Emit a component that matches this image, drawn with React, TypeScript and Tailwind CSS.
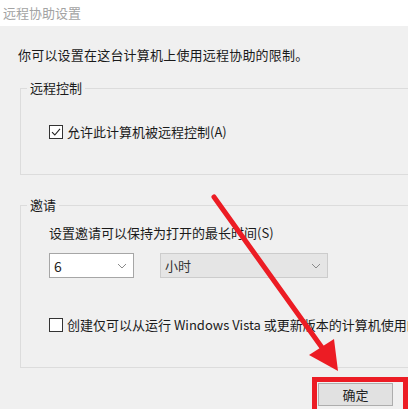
import React from "react";

const FONT = {
  fontFamily: '"Microsoft YaHei", "Noto Sans CJK SC", "Noto Sans", sans-serif',
};

function Checkbox({ checked }: { checked?: boolean }) {
  return (
    <span className="flex h-[14px] w-[14px] shrink-0 items-center justify-center border border-[#333333] bg-white">
      {checked && (
        <svg width="10" height="10" viewBox="0 0 10 10">
          <path d="M1 5.2 L3.8 8 L9 1.8" fill="none" stroke="#222" strokeWidth="1.1" />
        </svg>
      )}
    </span>
  );
}

function Chevron() {
  return (
    <svg width="10" height="6" viewBox="0 0 10 6">
      <path d="M1 1 L5 5 L9 1" fill="none" stroke="#8a8a8a" strokeWidth="1" />
    </svg>
  );
}

export default function App() {
  return (
    <div
      className="relative h-[409px] w-[408px] overflow-hidden bg-[#f0f0f0] text-[13px] leading-[18px] text-[#1a1a1a]"
      style={FONT}
    >
      {/* title bar */}
      <div className="flex h-[26px] items-center bg-white pl-[3px] text-[#a3a3a3]">
        远程协助设置
      </div>

      <p className="ml-[18px] mt-[20px] whitespace-nowrap tracking-[0.2px]">
        你可以设置在这台计算机上使用远程协助的限制。
      </p>

      {/* 远程控制 */}
      <fieldset className="ml-[20px] mt-[15px] w-[400px] border border-[#dcdcdc] pb-[33px] pl-[28px] pt-[26px]">
        <legend className="-ml-[22px] px-[3px]">远程控制</legend>
        <label className="flex items-center gap-[4px] whitespace-nowrap">
          <Checkbox checked />
          允许此计算机被远程控制(A)
        </label>
      </fieldset>

      {/* 邀请 */}
      <fieldset className="ml-[20px] mt-[21px] w-[400px] border border-[#dcdcdc] pb-[33px] pl-[28px] pt-[10px]">
        <legend className="-ml-[22px] px-[3px]">邀请</legend>
        <p className="whitespace-nowrap">设置邀请可以保持为打开的最长时间(S)</p>
        <div className="mt-[11px] flex gap-[26px]">
          <div className="flex h-[25px] w-[85px] items-center justify-between border border-[#a6a6a6] bg-white pl-[4px] pr-[6px] text-[14px] text-[#222]">
            <span>6</span>
            <Chevron />
          </div>
          <div className="flex h-[25px] w-[168px] items-center justify-between border border-[#cccccc] bg-[#e5e5e5] pl-[4px] pr-[6px] text-[#333]">
            <span>小时</span>
            <Chevron />
          </div>
        </div>
        <label className="mt-[38px] flex items-center gap-[4px] whitespace-nowrap">
          <Checkbox />
          创建仅可以从运行 Windows Vista 或更新版本的计算机使用的邀请(V)
        </label>
      </fieldset>

      {/* buttons */}
      <div className="ml-[312px] mt-[9px] h-[60px] w-[96px] border-[5px] border-[#ec1c24] pl-px pt-px">
        <div className="flex h-[23px] w-[75px] items-center justify-center border border-[#adadad] bg-[#e1e1e1] text-[#222]">
          确定
        </div>
      </div>

      {/* red annotation arrow */}
      <svg
        className="pointer-events-none absolute left-0 top-0"
        width="408"
        height="409"
        viewBox="0 0 408 409"
      >
        <line x1="214" y1="197" x2="323" y2="349" stroke="#ec1c24" strokeWidth="5" strokeLinecap="round" />
        <polygon points="309,355 334,339 338,371" fill="#ec1c24" />
      </svg>
    </div>
  );
}
